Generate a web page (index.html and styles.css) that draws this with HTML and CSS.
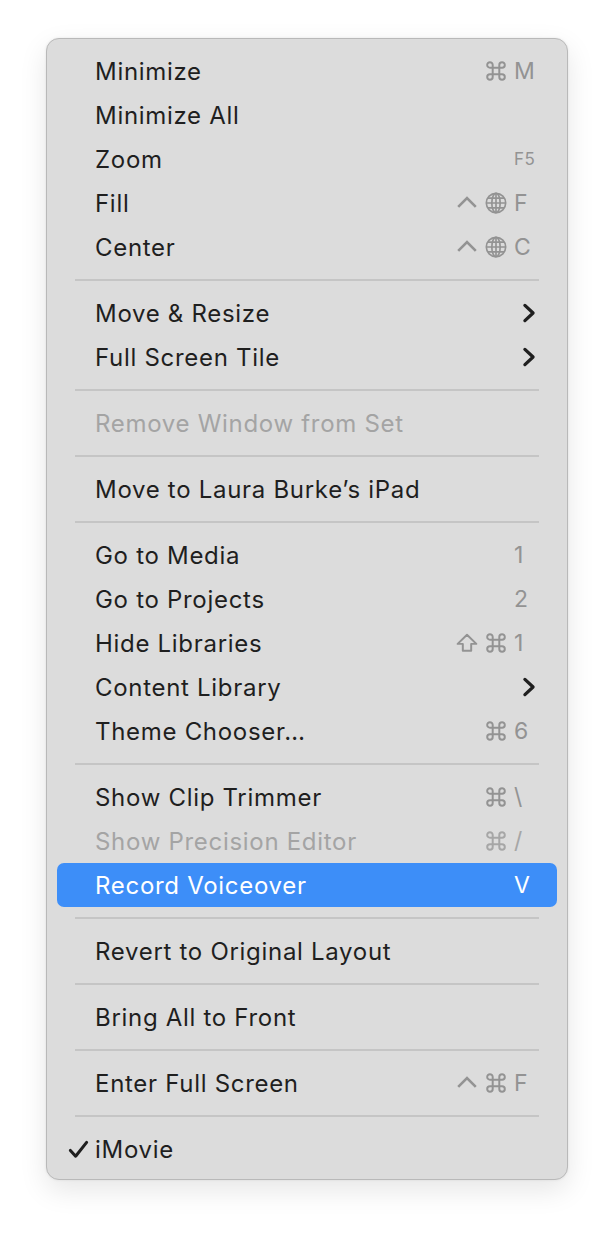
FILE: index.html
```html
<!DOCTYPE html>
<html lang="en">
<head>
    <meta charset="UTF-8">
    <meta name="viewport" content="width=device-width, initial-scale=1.0">
    <title>Window Menu</title>
    <link rel="stylesheet" href="styles.css">
</head>
<body>
    <svg width="0" height="0" class="defs">
        <symbol id="cmd" viewBox="0 0 20 20">
            <path d="M7 7H13V13H7Z M7 7V4.5A2.5 2.5 0 1 0 4.5 7H7 M13 7V4.5A2.5 2.5 0 1 1 15.5 7H13 M7 13V15.5A2.5 2.5 0 1 1 4.5 13H7 M13 13V15.5A2.5 2.5 0 1 0 15.5 13H13" fill="none" stroke="currentColor" stroke-width="1.8"/>
        </symbol>
        <symbol id="ctrl" viewBox="0 0 20 20">
            <path d="M2 13.5L10 5.5L18 13.5" fill="none" stroke="currentColor" stroke-width="2.4"/>
        </symbol>
        <symbol id="globe" viewBox="0 0 20 20">
            <g fill="none" stroke="currentColor" stroke-width="1.5">
                <circle cx="10" cy="10" r="8.8"/>
                <ellipse cx="10" cy="10" rx="3.8" ry="8.8"/>
                <path d="M10 1.2V18.8 M1.2 10H18.8 M2.6 5.6H17.4 M2.6 14.4H17.4"/>
            </g>
        </symbol>
        <symbol id="shift" viewBox="0 0 20 20">
            <path d="M10 2.5L18.5 10.8H13.8V17H6.2V10.8H1.5Z" fill="none" stroke="currentColor" stroke-width="1.8" stroke-linejoin="round"/>
        </symbol>
        <symbol id="chev" viewBox="0 0 12 20">
            <path d="M2.5 3.5L9.5 10L2.5 16.5" fill="none" stroke="currentColor" stroke-width="2.8" stroke-linecap="round" stroke-linejoin="round"/>
        </symbol>
        <symbol id="tick" viewBox="0 0 22 22">
            <path d="M2.5 12L8 18L19.5 3.5" fill="none" stroke="currentColor" stroke-width="3.2" stroke-linecap="round" stroke-linejoin="round"/>
        </symbol>
    </svg>

    <div class="menu">
        <div class="item"><span class="label">Minimize</span><span class="keys"><span class="mods"><svg class="ic"><use href="#cmd"/></svg></span><span class="key">M</span></span></div>
        <div class="item"><span class="label">Minimize All</span></div>
        <div class="item"><span class="label">Zoom</span><span class="keys"><span class="mods"></span><span class="key small">F5</span></span></div>
        <div class="item"><span class="label">Fill</span><span class="keys"><span class="mods"><svg class="ic"><use href="#ctrl"/></svg><svg class="ic"><use href="#globe"/></svg></span><span class="key">F</span></span></div>
        <div class="item"><span class="label">Center</span><span class="keys"><span class="mods"><svg class="ic"><use href="#ctrl"/></svg><svg class="ic"><use href="#globe"/></svg></span><span class="key">C</span></span></div>
        <div class="sep"></div>
        <div class="item"><span class="label">Move &amp; Resize</span><svg class="chev"><use href="#chev"/></svg></div>
        <div class="item"><span class="label">Full Screen Tile</span><svg class="chev"><use href="#chev"/></svg></div>
        <div class="sep"></div>
        <div class="item disabled"><span class="label">Remove Window from Set</span></div>
        <div class="sep"></div>
        <div class="item"><span class="label">Move to Laura Burke’s iPad</span></div>
        <div class="sep"></div>
        <div class="item"><span class="label">Go to Media</span><span class="keys"><span class="mods"></span><span class="key">1</span></span></div>
        <div class="item"><span class="label">Go to Projects</span><span class="keys"><span class="mods"></span><span class="key">2</span></span></div>
        <div class="item"><span class="label">Hide Libraries</span><span class="keys"><span class="mods"><svg class="ic"><use href="#shift"/></svg><svg class="ic"><use href="#cmd"/></svg></span><span class="key">1</span></span></div>
        <div class="item"><span class="label">Content Library</span><svg class="chev"><use href="#chev"/></svg></div>
        <div class="item"><span class="label">Theme Chooser…</span><span class="keys"><span class="mods"><svg class="ic"><use href="#cmd"/></svg></span><span class="key">6</span></span></div>
        <div class="sep"></div>
        <div class="item"><span class="label">Show Clip Trimmer</span><span class="keys"><span class="mods"><svg class="ic"><use href="#cmd"/></svg></span><span class="key">\</span></span></div>
        <div class="item disabled"><span class="label">Show Precision Editor</span><span class="keys"><span class="mods"><svg class="ic"><use href="#cmd"/></svg></span><span class="key">/</span></span></div>
        <div class="item selected"><span class="label">Record Voiceover</span><span class="keys"><span class="mods"></span><span class="key">V</span></span></div>
        <div class="sep"></div>
        <div class="item"><span class="label">Revert to Original Layout</span></div>
        <div class="sep"></div>
        <div class="item"><span class="label">Bring All to Front</span></div>
        <div class="sep"></div>
        <div class="item"><span class="label">Enter Full Screen</span><span class="keys"><span class="mods"><svg class="ic"><use href="#ctrl"/></svg><svg class="ic"><use href="#cmd"/></svg></span><span class="key">F</span></span></div>
        <div class="sep"></div>
        <div class="item"><svg class="check"><use href="#tick"/></svg><span class="label">iMovie</span></div>
    </div>
</body>
</html>
```

FILE: styles.css
```css
body {
    margin: 0;
    background-color: #ffffff;
    font-family: Inter, "Noto Sans", sans-serif;
    width: 614px;
    height: 1234px;
}

.defs {
    position: absolute;
}

.menu {
    margin: 38px 0 0 46px;
    width: 522px;
    box-sizing: border-box;
    padding: 10px 10px 8px;
    background-color: #dcdcdc;
    border: 1px solid #b9b9b9;
    border-radius: 13px;
    box-shadow: 0 10px 28px rgba(0,0,0,0.10), 0 0 3px rgba(0,0,0,0.08);
}

.item {
    height: 44px;
    display: flex;
    align-items: center;
    padding: 0 20px 0 38px;
    color: #1f1f1f;
    font-size: 24px;
    border-radius: 7px;
    position: relative;
}

.label {
    flex: 1;
    letter-spacing: 0.7px;
}

.disabled {
    color: #a4a4a4;
}

.disabled .keys {
    color: #a6a6a6;
}

.selected {
    background-color: #3d8ef8;
    color: #ffffff;
}

.selected .keys {
    color: #ffffff;
}

.keys {
    display: flex;
    align-items: center;
    color: #939393;
}

.mods {
    display: flex;
    align-items: center;
    gap: 7px;
    margin-right: 7px;
}

.ic {
    width: 22px;
    height: 22px;
}

.key {
    width: 23px;
    font-size: 23px;
    letter-spacing: 0.5px;
}

.key.small {
    font-size: 17px;
}

.chev {
    width: 14px;
    height: 24px;
    color: #1f1f1f;
    margin-right: 1px;
}

.check {
    position: absolute;
    left: 11px;
    width: 21px;
    height: 21px;
    color: #1f1f1f;
}

.sep {
    height: 2px;
    margin: 10px 18px;
    background-color: #c5c5c5;
}
```
